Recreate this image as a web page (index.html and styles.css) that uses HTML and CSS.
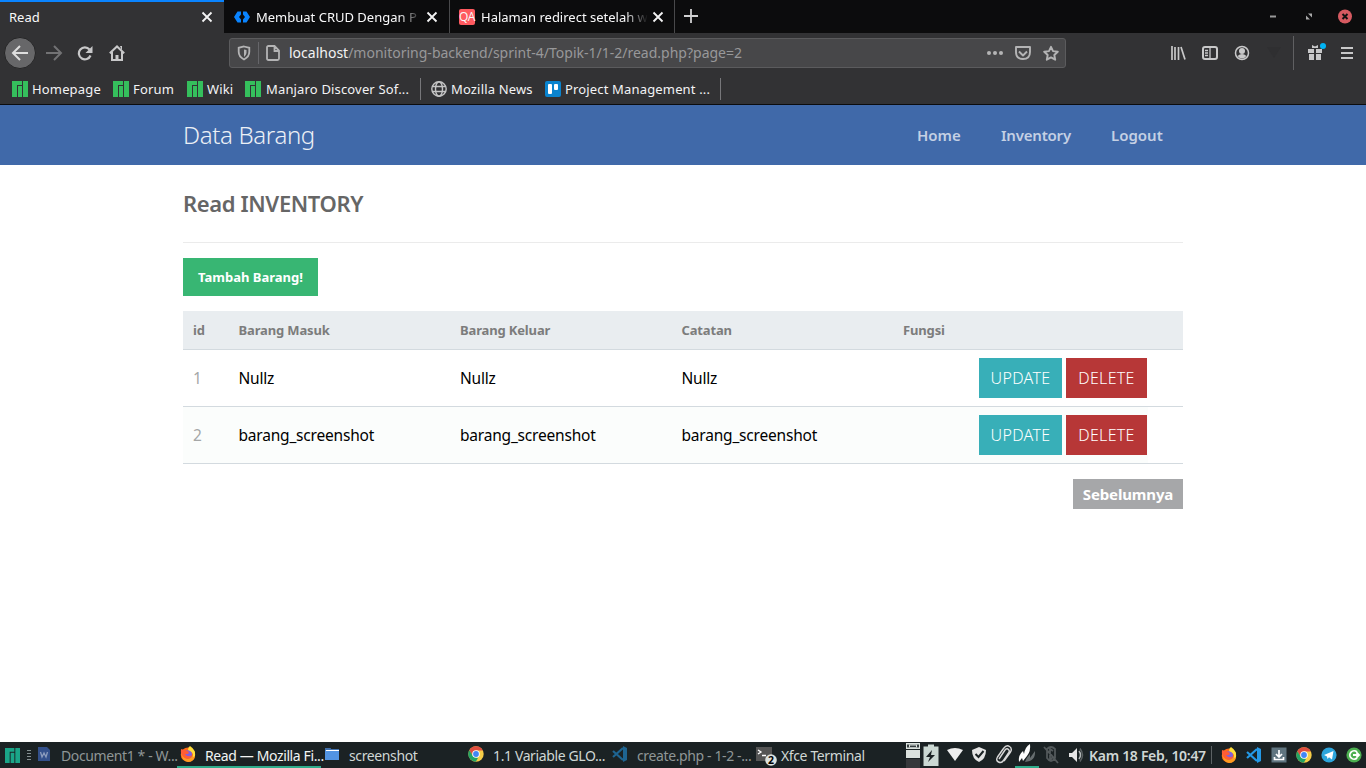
FILE: index.html
```html
<!DOCTYPE html>
<html lang="id">
<head>
<meta charset="utf-8">
<title>Read</title>
<link rel="stylesheet" href="styles.css">
</head>
<body>
<svg class="defs" width="0" height="0">
  <symbol id="close" viewBox="0 0 12 12"><path d="M1.5 1.5l9 9m0-9l-9 9" stroke="#f4f4f5" stroke-width="1.8" fill="none"/></symbol>
  <symbol id="manjaro" viewBox="0 0 16 16"><path fill="currentColor" d="M0 0h10v4H5v12H0zM6 5h4v11H6zM11 0h5v16h-5z"/></symbol>
  <symbol id="firefox" viewBox="0 0 16 16"><circle cx="8" cy="8.7" r="7.2" fill="#ff6a1a"/><path d="M1 4q0 11 7 12 6 0 7-6 0-6-5-9 1 4 3 6 0 5-5 6-6-1-6-6z" fill="#ff9b20"/><circle cx="8" cy="8.3" r="4" fill="#8160db"/><path d="M1 3l3 1 3 1q3 1 1 3L5 8q3 4 7 1-2 5-7 3-5-3-4-9z" fill="#ff5d35"/><path d="M10 0q6 4 5 10l-2 1q1-5-5-7 0-3 2-4z" fill="#ffdf3b"/></symbol>
  <symbol id="chrome" viewBox="0 0 16 16"><circle cx="8" cy="8" r="7.7" fill="#f7ce48"/><path d="M1.3 4.2A7.7 7.7 0 0 1 14.8 4.5H8L4.8 10z" fill="#df4d40"/><path d="M1.3 4.2L5 10l5 2-2.2 3.7A7.7 7.7 0 0 1 1.3 4.2z" fill="#23a365"/><circle cx="8" cy="8" r="3.8" fill="#fff"/><circle cx="8" cy="8" r="2.9" fill="#4286f5"/></symbol>
  <symbol id="vscode" viewBox="0 0 16 16"><path d="M1 5l10 9M1 11L11 2" stroke="currentColor" stroke-width="2.2"/><path d="M11 0l4 2v12l-4 2z" fill="currentColor"/></symbol>
</svg>
<div class="screen">
  <div class="tabs">
    <div class="tab active"><span class="tt">Read</span><svg class="x"><use href="#close"/></svg></div>
    <div class="tab"><svg class="fav" viewBox="0 0 16 16"><path d="M7 2.500H3.500L0 8l3.500 5.500H7V10.500L5 8l2-2.500zM9 2.500h3.500L16 8l-3.500 5.500H9V10.500L11 8 9 5.500z" fill="#0a84ff"/></svg><span class="tt fade">Membuat CRUD Dengan P</span><svg class="x"><use href="#close"/></svg></div>
    <div class="tab"><span class="fav qa">QA</span><span class="tt fade">Halaman redirect setelah w</span><svg class="x"><use href="#close"/></svg></div>
    <svg class="plus" viewBox="0 0 14 14"><path d="M7 0v14M0 7h14" stroke="#d0d0d1" stroke-width="1.8"/></svg>
    <svg class="winbtns" viewBox="0 0 90 16"><path d="M4 8.500h6" stroke="#999" stroke-width="2"/><path d="M42 5.500h4v4zM40 7.500v4h4z" fill="#aaa"/><circle cx="79" cy="8.500" r="7" fill="#d65a61"/><path d="M76.500 6l5 5m0-5l-5 5" stroke="#111" stroke-width="1.900"/></svg>
  </div>
  <div class="navbar">
    <span class="back"><svg width="18" height="18" viewBox="0 0 18 18"><path d="M17 9H2m7-7L2 9l7 7" fill="none" stroke="#dedede" stroke-width="2"/></svg></span>
    <svg class="fwd" viewBox="0 0 18 18"><path d="M1 9h15M9 2l7 7-7 7" fill="none" stroke="#727274" stroke-width="2"/></svg>
    <svg class="reload" viewBox="0 0 16 16"><path d="M13.500 10.500A6 6 0 1 1 12.500 4.500" fill="none" stroke="#c8c8c9" stroke-width="2.200"/><path d="M15.500 1v7h-7z" fill="#c8c8c9"/></svg>
    <svg class="home" viewBox="0 0 16 16"><path d="M.8 8.300L8 1.500l7.200 6.800M3 7v8h10V7" fill="none" stroke="#c8c8c9" stroke-width="2"/><path d="M6.500 10h3v5h-3z" fill="#c8c8c9"/><path d="M11 1h2v5z" fill="#c8c8c9"/></svg>
    <div class="url">
      <svg class="shield" viewBox="0 0 14 16"><path d="M7 1.500l5.300 1.300v4q0 5-5.300 7.700Q1.700 11.800 1.700 6.800v-4z" fill="none" stroke="#b4b4b5" stroke-width="1.800"/><path d="M7 4.500l2.500.5v3q-.5 2.500-2.500 4z" fill="#b4b4b5"/></svg>
      <i class="usep"></i>
      <svg class="doc" viewBox="0 0 14 16"><path d="M2.500 1h6L13 5.500V13.500q0 1.500-1.500 1.500h-9Q1 15 1 13.500v-11Q1 1 2.500 1zM8.500 1v5H13" fill="none" stroke="#b4b4b5" stroke-width="1.800"/></svg>
      <span class="addr"><b>localhost</b>/monitoring-backend/sprint-4/Topik-1/1-2/read.php?page=2</span>
      <svg class="uicons" viewBox="0 0 74 16"><g fill="#b4b4b5"><circle cx="3" cy="8" r="2"/><circle cx="9" cy="8" r="2"/><circle cx="15" cy="8" r="2"/></g><path d="M30 2h14v5q0 7-7 7t-7-7zM33 6.500l4 4 4-4M65 1.800l2 4.300 4.800.6-3.500 3.300.9 4.700-4.200-2.300-4.200 2.300.9-4.700L58.200 6.700 63 6.100z" fill="none" stroke="#b4b4b5" stroke-width="1.900" stroke-linejoin="round"/></svg>
    </div>
    <svg class="tools" viewBox="0 0 186 34"><g fill="none" stroke="#c8c8c9" stroke-width="2"><path d="M2 10v14M5 11v13M8.500 11v13M11 11l4 12.500" stroke-width="1.700"/><rect x="33" y="11" width="14" height="12" rx="2"/><path d="M40 11v12M35 14.500h3M35 17h3M35 19.500h3" stroke-width="1.300"/><circle cx="72" cy="17" r="6.500" stroke-width="1.500"/></g><circle cx="72" cy="15" r="3" fill="#c8c8c9"/><path d="M67.500 20q4.500-4 9 0-4.500 5-9 0z" fill="#c8c8c9"/><path d="M97 11h14l-7 11z" fill="#2f2f31"/><path d="M123.500 0v34" stroke="#606062"/><path d="M138 13h6v4h-6zM146 13h6v4h-6zM139 18h5v6h-5zM146 18h5v6h-5zM142 9l3 1.500L148 9v3h-6z" fill="#c8c8c9"/><circle cx="153" cy="10" r="3" fill="#00b3f4"/><path d="M171 12h12M171 17h12M171 22h12" stroke="#c8c8c9" stroke-width="2"/></svg>
  </div>
  <div class="bookmarks">
    <span class="bm b1"><svg><use href="#manjaro"/></svg><em>Homepage</em></span>
    <span class="bm b2"><svg><use href="#manjaro"/></svg><em>Forum</em></span>
    <span class="bm b3"><svg><use href="#manjaro"/></svg><em>Wiki</em></span>
    <span class="bm b4"><svg><use href="#manjaro"/></svg><em>Manjaro Discover Sof...</em></span>
    <span class="bm b5"><svg viewBox="0 0 16 16"><g fill="none" stroke="#c4c4c4" stroke-width="1.400"><circle cx="8" cy="8" r="7.200"/><ellipse cx="8" cy="8" rx="3.500" ry="7.200"/><path d="M1 5.500h14M1 10.500h14"/></g></svg><em>Mozilla News</em></span>
    <span class="bm b6"><svg viewBox="0 0 16 16"><rect width="16" height="16" rx="2" fill="#0a84cf"/><rect x="3" y="3" width="4" height="10" rx="1" fill="#fff"/><rect x="9" y="3" width="4" height="6" rx="1" fill="#fff"/></svg><em>Project Management ...</em></span>
    <i class="bmend"></i>
  </div>
  <main class="page">
    <header class="site"><div class="wrap"><h1>Data Barang</h1><nav><a class="n1">Home</a><a class="n2">Inventory</a><a class="n3">Logout</a></nav></div></header>
    <section class="wrap content">
      <h2>Read INVENTORY</h2>
      <a class="add">Tambah Barang!</a>
      <div class="table">
        <div class="row head"><span>id</span><span>Barang Masuk</span><span>Barang Keluar</span><span>Catatan</span><span>Fungsi</span></div>
        <div class="row"><span class="id">1</span><span>Nullz</span><span>Nullz</span><span>Nullz</span><span class="act"><a class="up">UPDATE</a><a class="del">DELETE</a></span></div>
        <div class="row alt"><span class="id">2</span><span>barang_screenshot</span><span>barang_screenshot</span><span>barang_screenshot</span><span class="act"><a class="up">UPDATE</a><a class="del">DELETE</a></span></div>
      </div>
      <a class="prev">Sebelumnya</a>
    </section>
  </main>
  <footer class="taskbar">
    <svg class="menu"><use href="#manjaro"/></svg>
    <svg class="grip" viewBox="0 0 4 10"><path d="M0 .5h4M0 3.500h4M0 6.500h4M0 9.500h4" stroke="#859092"/></svg>
    <div class="task k1 dim"><svg viewBox="0 0 16 16"><path d="M2 1h9l3 3v11H2z" fill="#33508b"/><path d="M4.500 6l1.500 5 2-4 2 4 1.500-5" fill="none" stroke="#8c9cbd" stroke-width="1.300"/></svg><em>Document1 * - W...</em></div>
    <div class="task k2 on"><svg><use href="#firefox"/></svg><em>Read — Mozilla Fi...</em></div>
    <div class="task k3"><svg viewBox="0 0 16 16"><path d="M1 2h5l1 1h8v11H1z" fill="#5294e2"/><path d="M1 2h5l1 1h8v1H1z" fill="#416faa"/><path d="M2 4.500h13" stroke="#fff"/></svg><em>screenshot</em></div>
    <div class="task k4"><svg><use href="#chrome"/></svg><em>1.1 Variable GLO...</em></div>
    <div class="task k5 dim"><svg><use href="#vscode"/></svg><em>create.php - 1-2 -...</em></div>
    <div class="task k6"><svg viewBox="0 0 22 20"><rect width="16" height="14" y="1" fill="#555"/><path d="M2 4l3 2-3 2M6 9.500h4" fill="none" stroke="#fff" stroke-width="1.300"/><circle cx="15" cy="14" r="5.800" fill="#dce2df"/><text x="12" y="18" font-size="10.500" font-weight="bold">2</text></svg><em>Xfce Terminal</em></div>
    <svg class="tray" viewBox="0 0 180 26"><path d="M0 1h14v6H0zM0 8h14v8H0z" fill="#dce2df"/><path d="M1 2.500h12v3H1z" fill="#343c3e"/><path d="M3 2.500h8v3H3z" fill="#dce2df"/><path d="M4 3.500h6v1.500H4z" fill="#343c3e"/><path d="M0 17h14v9H0z" fill="#36383b"/><path d="M17.500 4.500h4.500V2.500h6v2h4.500V24h-15z" fill="#cbd8d3"/><path d="M26 8l-6 7h4l-2 5 7-7h-4z" fill="#1b2224"/><path d="M41 8q8-4 16 0l-8 11z" fill="#eee"/><path d="M73 5l7 3q0 9-7 12-7-3-7-12z" fill="#e4e4e4"/><path d="M69.500 12l3 3 5-6" fill="none" stroke="#1b2224" stroke-width="2"/><path d="M93 17l6-9q2-2 3.500-.5t0 3.500l-5 7.500q-2 3-5 1.500t-1-5l6-8.500q3-4 6-2t1 5.500L98 19" fill="none" stroke="#d8d8d8" stroke-width="1.400"/><path d="M113 20q-1-7 4-11l1 3q1-7 6-10 1 7-3 12l-4 5-1-3z" fill="#fff"/><path d="M119 20q1-4 5-8v4l5-7q1 10-10 11z" fill="#666d6f"/><path d="M109 24h24v2h-24z" fill="#2eac8b"/><path d="M141 7q4-4 8 0v9q-4 6-8 0zM138 5l14 16M142 9l5 6-3 3V7l3 2" fill="none" stroke="#53595b" stroke-width="1.800"/><path d="M163 11h3l5-5v14l-5-5h-3z" fill="#e5e5e5"/><path d="M173 9q3 4 0 8" fill="none" stroke="#b3b7b8" stroke-width="1.500"/><path d="M174 6.500q5 6.500 0 13" fill="none" stroke="#5b6163" stroke-width="1.500"/></svg>
    <span class="clock">Kam 18 Feb, 10:47</span><i class="tsep"></i>
    <div class="quick"><svg><use href="#firefox"/></svg><svg><use href="#vscode"/></svg><svg viewBox="0 0 16 16"><rect width="15" height="15" x=".5" y=".5" fill="#607580"/><path d="M8 3v6M5 7l3 3 3-3M3.500 10v2.500h9V10" fill="none" stroke="#fff" stroke-width="1.700"/></svg><svg><use href="#chrome"/></svg><svg viewBox="0 0 16 16"><circle cx="8" cy="8" r="7.600" fill="#2ca5dc"/><path d="M3 8l9.500-4L11 12.500 8 10.300 6.500 12 6 9.500z" fill="#fff"/></svg><svg viewBox="0 0 16 16"><circle cx="8" cy="8" r="7.600" fill="#4caf50"/><path d="M11 5A4.200 4.200 0 1 0 11 11M7 8h6M10.500 5.500L13 8l-2.500 2.500" fill="none" stroke="#fff" stroke-width="1.800"/></svg></div>
  </footer>
</div>
</body>
</html>
```
FILE: styles.css
```css
* { box-sizing: border-box; }
body { margin: 0; font-family: "Noto Sans", sans-serif; }
em, b { font-style: normal; font-weight: 400; }
svg { display: block; flex: none; }
.defs { position: absolute; }
.screen { width: 1366px; height: 768px; display: flex; flex-direction: column; overflow: hidden; }
.tabs { height: 33px; background: #0c0c0d; display: flex; flex: none; align-items: stretch; }
.tab { width: 225px; display: flex; align-items: center; padding: 1px 11px 0 9px; border-right: 1px solid #49494b; color: #f9f9fa; font-size: 13px; }
.tab.active { width: 224px; margin-right: 1px; background: #323234; border-right: 0; border-top: 2px solid #0a84ff; padding-top: 0; padding-bottom: 1px; }
.tt { flex: 1; white-space: nowrap; }
.fav { width: 16px; height: 16px; margin-right: 6px; flex: none; }
.qa { background: #ff5a5f; border-radius: 2px; font: 12px/16px "Open Sans", sans-serif; text-align: center; letter-spacing: -.5px; }
.fade { mask-image: linear-gradient(90deg, #000 86%, transparent 100%); margin-right: 4px; }
.x { width: 12px; height: 12px; }
.plus { width: 14px; height: 14px; margin: 9px 0 0 9px; }
.winbtns { width: 90px; height: 16px; margin: 8px 10px 0 auto; }
.navbar { height: 40px; flex: none; background: #323234; display: flex; align-items: center; padding-left: 4px; }
.back { width: 32px; height: 32px; border-radius: 50%; background: #676769; border: 1px solid #252526; display: flex; align-items: center; justify-content: center; }
.fwd { width: 18px; height: 18px; margin-left: 9px; }
.reload { width: 16px; height: 16px; margin-left: 14px; }
.home { width: 16px; height: 16px; margin-left: 16px; }
.url { width: 837px; height: 30px; margin-left: 104px; background: #474749; border: 1px solid #5b5b5d; border-radius: 3px; display: flex; align-items: center; flex: none; }
.shield { width: 14px; height: 16px; margin-left: 7px; }
.usep { width: 1px; height: 22px; background: #66666a; margin: 0 7px; }
.doc { width: 14px; height: 16px; }
.addr { font-size: 14px; margin-left: 9px; padding-bottom: 2px; color: #98989a; white-space: nowrap; flex: 1; }
.addr b { color: #f2f2f3; }
.uicons { width: 74px; height: 16px; margin-right: 5px; }
.tools { width: 186px; height: 34px; margin-left: 104px; }
.bookmarks { height: 32px; flex: none; background: #323234; border-bottom: 1px solid #0c0c0d; display: flex; align-items: center; font-size: 13px; letter-spacing: .16px; color: #f3f3f4; white-space: nowrap; padding-left: 12px; }
.bm { display: flex; align-items: center; gap: 4px; color: #35bf5c; }
.bm em { color: #f3f3f4; }
.bm svg { width: 16px; height: 16px; }
.b1 { width: 101px; } .b2 { width: 74px; } .b3 { width: 58px; } .b4 { width: 175px; gap: 5px; }
.b5 { width: 125px; border-left: 1px solid #77777a; padding-left: 10px; height: 22px; }
.b6 { width: 175px; }
.bmend { width: 1px; height: 22px; background: #77777a; }
.page { flex: 1; background: #fff; }
.wrap { width: 1000px; margin: 0 auto; }
.site { height: 60px; background: #4069a9; }
.site .wrap { display: flex; height: 60px; align-items: center; justify-content: space-between; }
h1 { margin: 0; padding-bottom: 2px; font-size: 24px; font-weight: 300; letter-spacing: -.35px; color: #ecf0f6; }
nav { display: flex; gap: 40px; padding-right: 20px; font-size: 15px; font-weight: 600; color: #c4d0e4; white-space: nowrap; }
.n1 { width: 44px; }
.n2 { width: 70px; letter-spacing: -.2px; }
.n3 { width: 52px; }
.content { display: flex; flex-direction: column; align-items: flex-start; }
h2 { margin: 0 0 15px; width: 1000px; height: 78px; line-height: 77px; border-bottom: 1px solid #ebebeb; font-size: 22px; font-weight: 600; letter-spacing: -.37px; color: #666; }
.add { height: 38px; width: 135px; text-align: center; background: #38b673; color: #fff; font-size: 13px; font-weight: 700; line-height: 38px; }
.table { margin-top: 15px; width: 1000px; }
.row { display: grid; grid-template-columns: 45.500px 221.500px 221.500px 221.500px 255px; height: 57px; align-items: center; border-bottom: 1px solid #d3dadf; font-size: 15.500px; letter-spacing: -.2px; color: #000; }
.row > span { padding-left: 10px; }
.row.head { height: 39px; background: #e9edf0; font-size: 13px; font-weight: 700; letter-spacing: -.15px; color: #7c7c7c; }
.row .id { color: #a5a7a7; }
.alt { background: linear-gradient(90deg, #fbfdfc 965px, #fff 965px); }
.act { display: flex; gap: 4px; justify-content: flex-end; padding-right: 1px; }
.act a { height: 40px; line-height: 40px; text-align: center; color: #fff; font-size: 16px; font-weight: 300; letter-spacing: .3px; }
.up { width: 83px; background: #38afb8; }
.del { width: 81px; background: #b73737; }
.prev { align-self: flex-end; width: 110px; height: 30px; line-height: 30px; margin-top: 15px; text-align: center; background: #a6a7a9; color: #fff; font-size: 15px; font-weight: 700; letter-spacing: -.15px; }
.taskbar { height: 26px; flex: none; background: #1b2224; display: flex; align-items: center; color: #d0d7d5; font-size: 14px; letter-spacing: -.38px; white-space: nowrap; padding-left: 5px; }
.menu { width: 15px; height: 15px; color: #1aa588; }
.grip { width: 4px; height: 10px; margin: 0 7px 0 7px; }
.task { display: flex; align-items: center; height: 26px; border-bottom: 2px solid transparent; flex: none; }
.task svg { width: 16px; height: 16px; margin-right: 9px; }
.task em { padding-top: 2px; }
.dim { color: #8f9696; }
.k1 { width: 139px; }
.k1 svg { margin-left: -2px; }
.k2 { width: 144px; padding-left: 3px; color: #f2f4f3; }
.on { border-color: #2eac8b; }
.k3 { width: 144px; padding-left: 3px; }
.k4 { width: 144px; padding-left: 3px; }
.k5 { width: 145px; padding-left: 3px; }
.k5 svg { color: #1e6491; }
.k6 { width: 152px; padding-left: 2px; }
.k6 svg { width: 22px; height: 20px; margin: 3px 3px 0 0; }
.tray { width: 180px; height: 26px; }
.clock { font-weight: 600; font-size: 14px; letter-spacing: -.3px; margin-left: 3px; }
.tsep { width: 1px; height: 18px; background: #5c6264; margin: 0 9px 0 auto; }
.quick { display: flex; gap: 9px; padding-right: 4px; color: #2499e6; }
.quick svg { width: 16px; height: 16px; }
```
